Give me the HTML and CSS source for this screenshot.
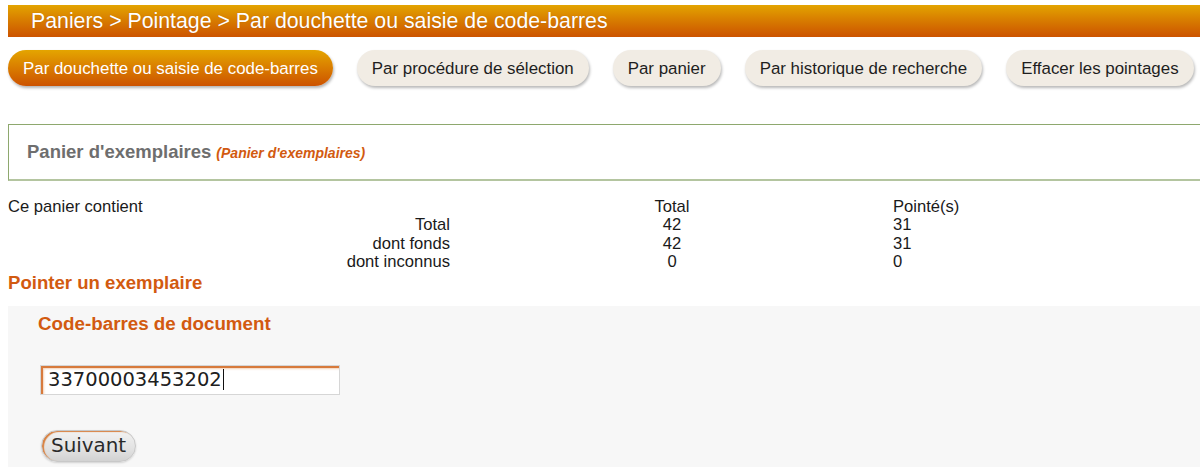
FILE: index.html
```html
<!DOCTYPE html>
<html lang="fr">
<head>
<meta charset="utf-8">
<title>Pointage</title>
<link rel="stylesheet" href="styles.css">
</head>
<body>
<div class="page">
  <h1 class="title-bar">Paniers &gt; Pointage &gt; Par douchette ou saisie de code-barres</h1>

  <nav class="tabs">
    <span class="tab tab-active">Par douchette ou saisie de code-barres</span>
    <span class="tab">Par procédure de sélection</span>
    <span class="tab">Par panier</span>
    <span class="tab">Par historique de recherche</span>
    <span class="tab">Effacer les pointages</span>
  </nav>

  <div class="basket-box">
    <span class="basket-name">Panier d'exemplaires</span>
    <span class="basket-type">(Panier d'exemplaires)</span>
  </div>

  <div class="stats">
    <div class="c1 left">Ce panier contient</div>
    <div class="c2">Total</div>
    <div class="c3">Pointé(s)</div>

    <div class="c1">Total</div>
    <div class="c2">42</div>
    <div class="c3">31</div>

    <div class="c1">dont fonds</div>
    <div class="c2">42</div>
    <div class="c3">31</div>

    <div class="c1">dont inconnus</div>
    <div class="c2">0</div>
    <div class="c3">0</div>
  </div>

  <h3 class="section-title">Pointer un exemplaire</h3>

  <form class="form-panel">
    <label class="field-label" for="cb">Code-barres de document</label>
    <div class="input-row">
      <div class="text-input" id="cb">33700003453202<span class="caret"></span></div>
    </div>
    <div class="btn-row">
      <span class="btn">Suivant</span>
    </div>
  </form>
</div>
</body>
</html>
```

FILE: styles.css
```css
html, body {
  margin: 0;
  padding: 0;
  overflow: hidden;
  background: #ffffff;
}

.page {
  width: 1230px;
  padding: 5px 0 0 8px;
  font-family: "Liberation Sans", Arial, sans-serif;
  color: #1a1a1a;
}

.title-bar {
  margin: 0;
  height: 32px;
  line-height: 33px;
  padding-left: 23px;
  font-size: 21.3px;
  font-weight: normal;
  color: #ffffff;
  background: linear-gradient(to bottom, #e3a400 0%, #d77a00 50%, #cc5300 100%);
  text-shadow: 0 0 1px rgba(120, 50, 0, 0.4);
}

.tabs {
  display: flex;
  gap: 24px;
  margin-top: 13px;
  height: 36px;
}

.tab {
  display: inline-flex;
  align-items: center;
  box-sizing: border-box;
  height: 36px;
  padding: 2px 15px 0;
  border-radius: 18px;
  font-size: 16.9px;
  color: #1e1e1e;
  background: #f1ece4;
  box-shadow: 1px 2px 3px rgba(0, 0, 0, 0.28);
  white-space: nowrap;
}

.tab-active {
  color: #ffffff;
  background: linear-gradient(to bottom, #e4a500 0%, #d97c00 50%, #cc5200 100%);
  box-shadow: 1px 2px 3px rgba(0, 0, 0, 0.3);
}

.basket-box {
  margin-top: 38px;
  height: 54px;
  display: flex;
  align-items: center;
  gap: 5px;
  padding-left: 18px;
  border: 1px solid #8ea86e;
  border-bottom: 2px solid #b4c5a0;
  border-right: none;
}

.basket-name {
  font-size: 18.5px;
  font-weight: bold;
  color: #6e6e6e;
}

.basket-type {
  font-size: 14px;
  font-weight: bold;
  font-style: italic;
  color: #d25a10;
  margin-top: 2px;
}

.stats {
  display: grid;
  grid-template-columns: 444px 440px 1fr;
  margin-top: 17px;
  font-size: 16.6px;
  line-height: 18.4px;
}

.stats .c1 {
  text-align: right;
  padding-right: 2px;
}

.stats .c1.left {
  text-align: left;
}

.stats .c2 {
  text-align: center;
}

.stats .c3 {
  padding-left: 1px;
}

.section-title {
  margin: 0;
  font-size: 18.6px;
  line-height: 22px;
  font-weight: bold;
  color: #d25a10;
}

.form-panel {
  margin: 12px 0 0 0;
  padding: 7px 0 0 30px;
  background: #f7f7f7;
  height: 160px;
}

.field-label {
  display: block;
  font-size: 18.8px;
  line-height: 22px;
  font-weight: bold;
  color: #d25a10;
}

.input-row {
  margin-top: 30px;
  padding-left: 2px;
}

.text-input {
  box-sizing: border-box;
  width: 300px;
  height: 30px;
  padding: 2px 0 0 7px;
  background: #ffffff;
  border: 1px solid #d6d6d6;
  box-shadow: inset 2px 2px 0 #d77a3c, inset 3px 3px 2px rgba(230, 150, 90, 0.45);
  font-family: "DejaVu Sans", Verdana, sans-serif;
  font-size: 19.5px;
  line-height: 24px;
  color: #202020;
}

.caret {
  display: inline-block;
  width: 1px;
  height: 21px;
  margin-left: 1px;
  background: #111111;
  vertical-align: -4px;
}

.btn-row {
  margin-top: 35px;
  padding-left: 3px;
}

.btn {
  display: inline-flex;
  align-items: center;
  box-sizing: border-box;
  height: 32px;
  padding: 0 9px 0 9px;
  border-radius: 16px;
  border: 1px solid #c8c8c8;
  background: linear-gradient(to bottom, #f2f2f2 0%, #e2e2e2 60%, #d2d2d2 100%);
  box-shadow: inset 2px 1px 1px #d8803f, 0 1px 2px rgba(0, 0, 0, 0.15);
  font-family: "DejaVu Sans", Verdana, sans-serif;
  font-size: 19.9px;
  color: #2a2a2a;
}
```
